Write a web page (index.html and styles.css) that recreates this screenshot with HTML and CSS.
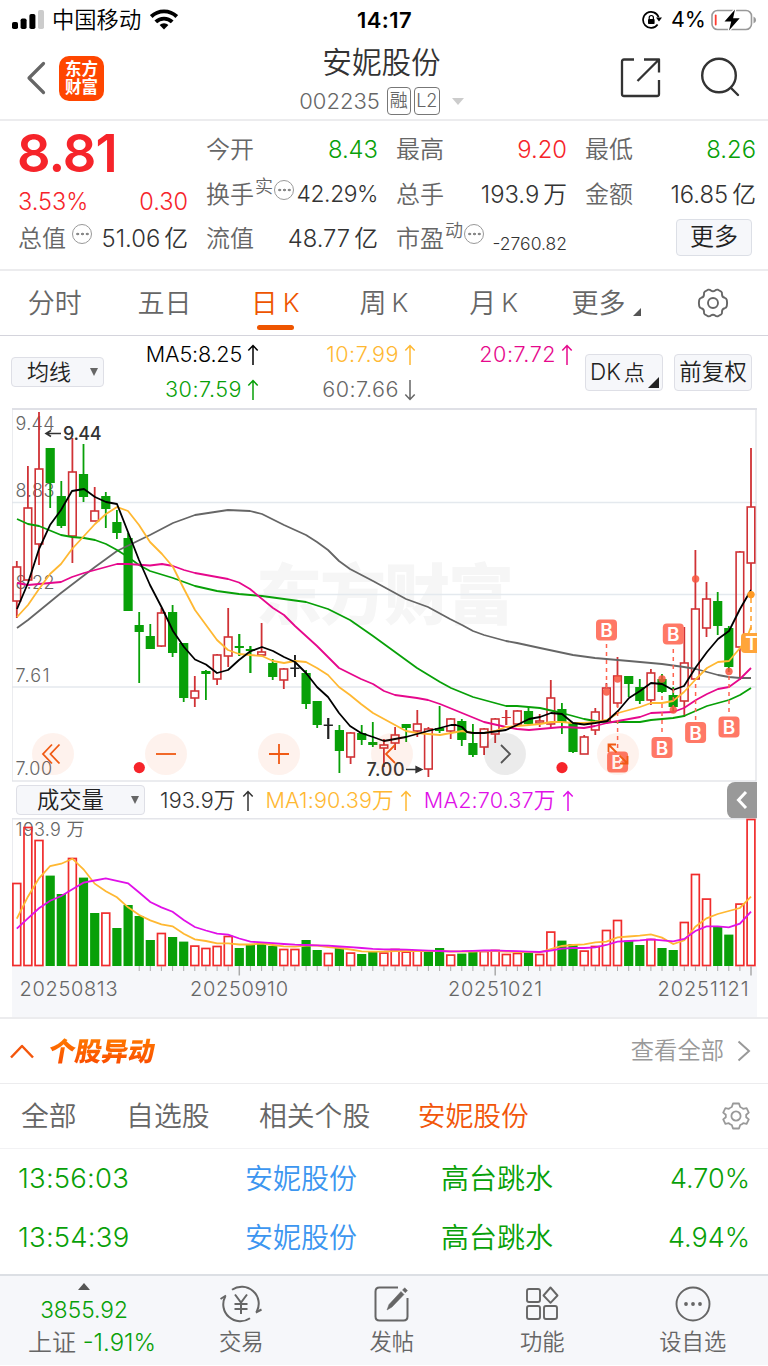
FILE: index.html
```html
<!DOCTYPE html>
<html lang="zh-CN">
<head>
<meta charset="UTF-8">
<meta name="viewport" content="width=device-width, initial-scale=1.0">
<title>安妮股份 002235</title>
<link rel="stylesheet" href="styles.css">
</head>
<body>

<div class="status-bar">
    <div class="status-left">
        <svg width="32" height="20" viewBox="0 0 32 20">
            <rect x="0" y="12" width="6" height="7" rx="1.8"/>
            <rect x="8.6" y="8.5" width="6" height="10.5" rx="1.8"/>
            <rect x="17.4" y="4" width="6" height="15" rx="1.8"/>
            <rect x="26" y="0" width="6" height="19" rx="1.8" fill="#ccc"/>
        </svg>
        <span class="carrier">中国移动</span>
        <svg class="wifi" width="28" height="21" viewBox="0 0 28 21" fill="none" stroke="#000" stroke-width="3.9">
            <path d="M1.2 7.6a18.3 18.3 0 0 1 25.6 0"/>
            <path d="M5.8 12.9a11.8 11.8 0 0 1 16.4 0"/>
            <path d="M14 20.5l-4.4-4.5a6.3 6.3 0 0 1 8.8 0z" fill="#000" stroke="none"/>
        </svg>
    </div>
    <div class="status-time">14:17</div>
    <div class="status-right">
        <svg width="20" height="18" viewBox="0 0 20 18" fill="none" stroke="#000" stroke-width="1.7">
            <path d="M16.6 6.2A8 8 0 1 0 15.6 13.5"/>
            <path d="M14 6.4h6l-3 4z" fill="#000" stroke="none"/>
            <rect x="6" y="8" width="6.6" height="5" rx=".8" fill="#000" stroke="none"/>
            <path d="M7.2 8V6.6a2.1 2.1 0 0 1 4.2 0V8" stroke-width="1.2"/>
        </svg>
        <span class="battery-pct">4%</span>
        <svg width="46" height="22" viewBox="0 0 46 22">
            <rect x="1" y="1.5" width="39.5" height="19" rx="5.5" fill="none" stroke="#999" stroke-width="1.6"/>
            <rect x="3.8" y="5.5" width="1.8" height="11" rx=".9" fill="#ff3b30"/>
            <path d="M42.5 7.5q2.6 1 2.6 3.5t-2.6 3.5z" fill="#999"/>
            <path d="M24 .5L13.5 12.5h6.7L18 21.5 28.7 9.3h-6.6z" stroke="#fff" stroke-width="2.5" paint-order="stroke"/>
        </svg>
    </div>
</div>

<div class="header">
    <svg class="back" width="20" height="34" viewBox="0 0 20 34" fill="none" stroke="#666" stroke-width="3.2" stroke-linecap="round" stroke-linejoin="round">
        <path d="M17.5 2.5L3 17l14.5 14.5"/>
    </svg>
    <div class="logo"><span>东方</span><span>财富</span></div>
    <div class="stock-name">
        <div class="name">安妮股份</div>
        <div class="code-line">
            <span class="code">002235</span>
            <span class="badge">融</span>
            <span class="badge wide">L2</span>
            <span class="tri-down"></span>
        </div>
    </div>
    <svg class="share" width="41" height="41" viewBox="0 0 41 41" fill="none" stroke="#333" stroke-width="2.3" stroke-linejoin="round">
        <path d="M14 2.5H4Q2 2.5 2 4.5V37q0 2 2 2h33q2 0 2-2V23"/>
        <path d="M24 2.5h15V15.5M39 2.5L17.5 24"/>
    </svg>
    <svg class="search" width="41" height="41" viewBox="0 0 41 41" fill="none" stroke="#333" stroke-width="2.4" stroke-linecap="round">
        <circle cx="19" cy="18.5" r="16.8"/>
        <path d="M31 31l7 7"/>
    </svg>
</div>

<div class="quote">
    <div class="quote-main">
        <div class="price">8.81</div>
        <div class="change"><span>3.53%</span><span>0.30</span></div>
        <div class="item"><label>总值</label><i class="more-dot gap"></i><b>51.06<em>亿</em></b></div>
    </div>
    <div class="quote-col">
        <div class="item"><label>今开</label><b class="green">8.43</b></div>
        <div class="item"><label>换手</label><sup>实</sup><i class="more-dot"></i><b class="tight">42.29%</b></div>
        <div class="item"><label>流值</label><b>48.77<em>亿</em></b></div>
    </div>
    <div class="quote-col">
        <div class="item"><label>最高</label><b class="red">9.20</b></div>
        <div class="item"><label>总手</label><b>193.9<em>万</em></b></div>
        <div class="item"><label>市盈</label><sup>动</sup><i class="more-dot"></i><b class="small">-2760.82</b></div>
    </div>
    <div class="quote-col">
        <div class="item"><label>最低</label><b class="green">8.26</b></div>
        <div class="item"><label>金额</label><b>16.85<em>亿</em></b></div>
        <div class="item more-row"><button class="more-btn">更多</button></div>
    </div>
</div>

<div class="tabs">
    <div class="tab">分时</div>
    <div class="tab">五日</div>
    <div class="tab active">日<em>K</em></div>
    <div class="tab">周<em>K</em></div>
    <div class="tab">月<em>K</em></div>
    <div class="tab more">更多<span class="corner"></span></div>
    <div class="tab">
        <svg width="32" height="30" viewBox="-16 -15 32 30" fill="none" stroke="#666" stroke-width="1.9" stroke-linejoin="round">
            <path d="M-5-13.3Q-3-13.6-2.2-12.5Q0-10.8 2.2-12.5Q3-13.6 5-13.3L8.4-11.2Q9.2-10.4 9-8.8Q9-5.6 11.8-5.2Q13.4-4.8 13.8-3Q14.4 0 13.8 3Q13.4 4.8 11.8 5.2Q9 5.6 9 8.8Q9.2 10.4 8.4 11.2L5 13.3Q3 13.6 2.2 12.5Q0 10.8-2.2 12.5Q-3 13.6-5 13.3L-8.4 11.2Q-9.2 10.4-9 8.8Q-9 5.6-11.8 5.2Q-13.4 4.8-13.8 3Q-14.4 0-13.8-3Q-13.4-4.8-11.8-5.2Q-9-5.6-9-8.8Q-9.2-10.4-8.4-11.2Z"/>
            <circle r="5"/>
        </svg>
    </div>
</div>

<div class="ma-bar">
    <div class="select ma-select">均线<span class="arrow"></span></div>
    <div class="ma-grid">
        <div class="ma black"><span>MA5:8.25</span><svg class="up"><use href="#arrow"/></svg></div>
        <div class="ma orange"><span>10:7.99</span><svg class="up"><use href="#arrow"/></svg></div>
        <div class="ma pink"><span>20:7.72</span><svg class="up"><use href="#arrow"/></svg></div>
        <div class="ma green"><span>30:7.59</span><svg class="up"><use href="#arrow"/></svg></div>
        <div class="ma gray"><span>60:7.66</span><svg class="up down"><use href="#arrow"/></svg></div>
    </div>
    <div class="btn dk">DK<em>点</em><span class="corner"></span></div>
    <div class="btn">前复权</div>
</div>

<div class="chart">
    <svg id="kline" width="745" height="374" viewBox="12 408 745 374"></svg>
    <div class="chart-tools">
        <span class="tool"><svg viewBox="-21 -21 42 42"><path d="M-1-9.5L-10 0l9 9.5M6.5-9.5L-2.5 0l9 9.5"/></svg></span>
        <span class="tool"><svg viewBox="-21 -21 42 42"><path d="M-10 0h20"/></svg></span>
        <span class="tool"><svg viewBox="-21 -21 42 42"><path d="M-10 0h20M0-10v20"/></svg></span>
        <span class="tool"><svg viewBox="-21 -21 42 42"><path d="M3-9L-6 0l9 9"/></svg></span>
        <span class="tool dark"><svg viewBox="-21 -21 42 42"><path d="M-4-9L5 0l-9 9"/></svg></span>
        <span class="tool"><svg viewBox="-21 -21 42 42"><path d="M-9.5-2v-7.5H-2M9.5 2v7.5H2M-9.5-9.5l8 8M9.5 9.5l-8-8"/></svg></span>
    </div>
</div>

<div class="vol-bar">
    <div class="select vol-select">成交量<span class="arrow"></span></div>
    <div class="ma dark"><span>193.9万</span><svg class="up"><use href="#arrow"/></svg></div>
    <div class="ma orange"><span>MA1:90.39万</span><svg class="up"><use href="#arrow"/></svg></div>
    <div class="ma purple"><span>MA2:70.37万</span><svg class="up"><use href="#arrow"/></svg></div>
    <div class="collapse">
        <svg width="12" height="20" viewBox="0 0 12 20" fill="none" stroke="#fff" stroke-width="3"><path d="M10 2L2.5 10l7.5 8"/></svg>
    </div>
</div>

<div class="volume">
    <svg id="volume" width="745" height="199" viewBox="12 818 745 199"></svg>
</div>

<div class="section-head">
    <svg width="24" height="15" viewBox="0 0 24 15" fill="none" stroke="#f4560c" stroke-width="2.5" stroke-linejoin="round"><path d="M1 13.5L12 2l11 11.5"/></svg>
    <div class="section-title">个股异动</div>
    <div class="see-all">查看全部</div>
    <svg width="14" height="22" viewBox="0 0 14 22" fill="none" stroke="#999" stroke-width="2"><path d="M1.5 1.5L12 11 1.5 20.5"/></svg>
</div>

<div class="filters">
    <span>全部</span>
    <span>自选股</span>
    <span>相关个股</span>
    <span class="active">安妮股份</span>
    <svg width="28" height="28" viewBox="-14 -14 28 28" fill="none" stroke="#999" stroke-width="1.8" stroke-linejoin="round">
        <path d="M-3-12.5H3L4.2-9Q6-8.2 7.2-7.2L10.6-7.8 12.8-3.4 10.2-1.2V1.2L12.8 3.4 10.6 7.8 7.2 7.2Q6 8.2 4.2 9L3 12.5H-3L-4.2 9Q-6 8.2-7.2 7.2L-10.6 7.8-12.8 3.4-10.2 1.2V-1.2L-12.8-3.4-10.6-7.8-7.2-7.2Q-6-8.2-4.2-9Z"/>
        <circle r="4.6"/>
    </svg>
</div>

<div class="events">
    <div class="event"><span>13:56:03</span><span class="blue">安妮股份</span><span>高台跳水</span><span class="pct">4.70%</span></div>
    <div class="event"><span>13:54:39</span><span class="blue">安妮股份</span><span>高台跳水</span><span class="pct">4.94%</span></div>
</div>

<div class="nav">
    <div class="nav-index">
        <span class="tri-up"></span>
        <div class="index-value">3855.92</div>
        <div class="index-name"><em>上证</em> -1.91%</div>
    </div>
    <div class="nav-item">
        <svg width="42" height="38" viewBox="-21 -19 42 38" fill="none" stroke="#666" stroke-width="2">
            <path d="M-9-14.3A17 17 0 0 1 15.8 7.5M9 14.3A17 17 0 0 1-15.8-7.5"/>
            <path d="M-20.5-5l5.500-3.500M20.500 5.500L14.800 8.500"/>
            <path d="M-6-9.500L0-1.500 6-9.500M0-1.500V10M-6.500 0h13M-6.500 5h13"/>
        </svg>
        <span>交易</span>
    </div>
    <div class="nav-item">
        <svg width="38" height="38" viewBox="-19 -19 38 38" fill="none" stroke="#666" stroke-width="2">
            <path d="M6-16.500H-12.500Q-16.500-16.500-16.500-12.500V12.500Q-16.500 16.500-12.500 16.500H11.500Q15.500 16.500 15.500 12.500V-6"/>
            <path d="M-5 6l2-5.500L9-12.500l3 3L0 3z M10.500-14l2.200-2.200 2.800 2.800-2.200 2.200z" fill="#666" stroke-width=".5"/>
        </svg>
        <span>发帖</span>
    </div>
    <div class="nav-item">
        <svg width="38" height="38" viewBox="-19 -19 38 38" fill="none" stroke="#666" stroke-width="1.9">
            <rect x="-15" y="-15" width="13" height="13" rx="2"/>
            <rect x="-15" y="2" width="13" height="13" rx="2"/>
            <rect x="2" y="2" width="13" height="13" rx="2"/>
            <path d="M8.5-16.5L15.5-8.5 8.5-1.2 1.5-8.5z" stroke-linejoin="round"/>
        </svg>
        <span>功能</span>
    </div>
    <div class="nav-item">
        <svg width="38" height="38" viewBox="-19 -19 38 38" fill="none" stroke="#666" stroke-width="1.9">
            <circle r="16.5"/>
            <g fill="#666" stroke="none"><circle cx="-7" r="1.9"/><circle r="1.9"/><circle cx="7" r="1.9"/></g>
        </svg>
        <span>设自选</span>
    </div>
</div>

<svg class="defs">
    <symbol id="arrow" viewBox="0 0 12 22"><path d="M6 1.500V21M1.300 6.500L6 1.500l4.700 5" fill="none" stroke="currentColor" stroke-width="1.5"/></symbol>
</svg>

<script src="chart.js"></script>
</body>
</html>
```

FILE: styles.css
```css
* {
    box-sizing: border-box;
}

body {
    margin: 0;
    width: 768px;
    height: 1366px;
    overflow: hidden;
    background: #fff;
    color: #333;
    font-family: Inter, "Noto Sans CJK SC", sans-serif;
    font-weight: 350;
    line-height: 1;
}

em, i, b {
    font-style: normal;
    font-weight: inherit;
}

svg {
    flex: none;
    display: block;
}

.defs {
    display: none;
}

.green { color: #08a008; }
.red { color: #f6242a; }
.orange { color: #ffb832; }
.pink { color: #e6088c; }
.purple { color: #e010e8; }
.gray { color: #666; }
.black { color: #000; }

/* status bar */
.status-bar {
    height: 40px;
    padding: 0 11px 0 12px;
    display: grid;
    grid-template-columns: 1fr auto 1fr;
    align-items: center;
    color: #000;
}

.status-left {
    display: flex;
    align-items: center;
}

.carrier {
    font-size: 22.3px;
    margin: 0 9px 0 8px;
}

.status-time {
    font-size: 22px;
    font-weight: 600;
    letter-spacing: 0.4px;
}

.status-right {
    display: flex;
    align-items: center;
    justify-content: flex-end;
}

.battery-pct {
    font-size: 21.5px;
    font-weight: 400;
    margin: 0 5px 0 9px;
}

/* header */
.header {
    height: 81px;
    border-bottom: 2px solid #ececee;
    display: grid;
    grid-template-columns: 33px 45px 1fr 41px 41px;
    align-items: center;
    padding: 0 27px 0 26px;
}

.header .back {
    margin-top: -3px;
}

.logo {
    width: 45px;
    height: 45px;
    margin-top: -3px;
    border-radius: 10px;
    background: #ff4600;
    color: #fff;
    font-size: 16.5px;
    font-weight: 700;
    line-height: 18px;
    display: flex;
    flex-direction: column;
    align-items: center;
    justify-content: center;
}

.stock-name {
    display: flex;
    flex-direction: column;
    align-items: center;
    gap: 10px;
    margin-top: 4px;
}

.share, .search {
    margin-top: -4px;
}

.share {
    margin-left: -39px;
}

.name {
    font-size: 29.6px;
}

.code-line {
    display: flex;
    align-items: center;
    gap: 3px;
    color: #666;
}

.code {
    font-size: 22px;
    margin-right: 4px;
}

.badge {
    width: 24px;
    height: 28px;
    border: 1px solid #777;
    border-radius: 4px;
    font-size: 18px;
    display: flex;
    align-items: center;
    justify-content: center;
}

.badge.wide {
    width: 26px;
}

.tri-down {
    border: 6.5px solid transparent;
    border-top: 7px solid #ccc;
    border-bottom: 0;
    margin-left: 9px;
}

/* quote */
.quote {
    height: 150px;
    border-bottom: 2px solid #ececee;
    padding: 7px 12px 0 18px;
    display: grid;
    grid-template-columns: 170px 172px 171px 171px;
    column-gap: 18px;
}

.price {
    font-size: 52.5px;
    line-height: 50px;
    height: 50px;
    font-weight: 600;
    letter-spacing: -1px;
    margin-left: -1px;
    color: #f6242a;
}

.change {
    display: flex;
    justify-content: space-between;
    height: 39px;
    line-height: 47px;
    font-size: 23.5px;
    color: #f6242a;
}

.item {
    height: 44.5px;
    display: flex;
    align-items: center;
}

.item label {
    font-size: 24px;
    color: #666;
}

.item b {
    margin-left: auto;
    font-size: 23.8px;
    white-space: nowrap;
}

.item b em {
    margin-left: 4px;
}

.item b.tight {
    font-size: 22.8px;
    letter-spacing: -0.4px;
}

.item b.small {
    font-size: 17.5px;
    padding-top: 8px;
}

.item sup {
    font-size: 18px;
    line-height: 1;
    color: #666;
    align-self: flex-start;
    margin: 5px 1px 0;
}

.more-dot {
    width: 20px;
    height: 20px;
    flex: none;
    border: 1.5px solid #999;
    border-radius: 50%;
    margin-top: -10px;
    background: radial-gradient(circle, #888 1.2px, transparent 1.6px) center / 4.8px 20px;
    background-clip: content-box;
    padding: 0 1.5px;
}

.more-dot.gap {
    margin-left: 6px;
}

.more-row {
    justify-content: flex-end;
    padding-right: 4px;
}

.more-btn {
    width: 76px;
    height: 37px;
    margin-top: -4px;
    padding: 0;
    border: 1.5px solid #dcdfe6;
    border-radius: 4px;
    background: #f6f7fa;
    font: inherit;
    font-size: 24px;
    color: #222;
}

/* tabs */
.tabs {
    height: 65px;
    border-bottom: 1px solid #d4d4dc;
    display: grid;
    grid-template-columns: repeat(7, 1fr);
}

.tab {
    position: relative;
    display: flex;
    align-items: center;
    justify-content: center;
    font-size: 27px;
    color: #666;
}

.tab em {
    margin-left: 5px;
    font-size: 26px;
}

.tab.active {
    color: #ee5500;
    padding-left: 2px;
}

.tab.active::after {
    content: "";
    position: absolute;
    bottom: 5px;
    width: 37px;
    height: 5px;
    border-radius: 3px;
    background: #ee5500;
}

.tab.more {
    padding-left: 6px;
}

.corner {
    border-left: 8px solid transparent;
    border-bottom: 8px solid #555;
    align-self: flex-end;
}

.tab .corner {
    margin: 0 0 19px 8px;
}

/* moving averages */
.ma-bar {
    height: 72px;
    padding: 0 15px 0 11px;
    display: flex;
    align-items: center;
}

.select, .btn {
    border: 1.5px solid #dedfe6;
    border-radius: 4px;
    background: #f6f7fa;
    color: #222;
    display: flex;
    align-items: center;
    flex: none;
}

.arrow {
    border: 4.5px solid transparent;
    border-top: 8px solid #666;
    border-bottom: 0;
    margin-left: auto;
}

.ma-select {
    width: 93px;
    height: 30px;
    font-size: 22px;
    padding: 0 5px 0 15px;
}

.ma-grid {
    display: grid;
    grid-template-columns: 155px 157px 157px;
    grid-template-rows: 35px 35px;
    margin-right: 12px;
    padding-top: 1px;
}

.ma {
    display: flex;
    align-items: center;
    justify-content: flex-end;
    font-size: 21.6px;
    white-space: nowrap;
}

.ma .up {
    width: 12px;
    height: 22px;
    margin-left: 5px;
}

.ma .down {
    transform: rotate(180deg);
}

.ma-grid .ma span {
    letter-spacing: 0.5px;
}

.ma-grid .black span {
    letter-spacing: -0.2px;
}

.btn {
    height: 37px;
    width: 78px;
    font-size: 22.5px;
    justify-content: center;
    margin-right: 11px;
}

.btn + .btn {
    margin-right: 0;
}

.btn.dk {
    justify-content: flex-start;
    padding-left: 4px;
}

.dk em {
    margin-left: 3px;
    font-size: 21px;
}

.dk .corner {
    border-left-width: 11px;
    border-bottom: 11px solid #222;
    margin: 0 3px 2px auto;
}

/* k-line */
.chart {
    position: relative;
    height: 374px;
    padding-left: 12px;
}

.chart text, .volume text {
    font-family: Inter, "Noto Sans CJK SC", sans-serif;
}

.chart-tools {
    position: absolute;
    left: 32px;
    bottom: 7px;
    display: flex;
    gap: 71px;
}

.tool {
    width: 42px;
    height: 42px;
    border-radius: 50%;
    background: rgba(240, 90, 20, 0.08);
}

.tool.dark {
    background: rgba(0, 0, 0, 0.08);
}

.tool path {
    fill: none;
    stroke: #f05a14;
    stroke-width: 1.8;
}

.tool.dark path {
    stroke: #555;
}

.watermark {
    font-size: 66px;
    font-weight: 900;
    fill: #f6f6f6;
}

.axis-label {
    font-size: 18px;
    fill: #666;
}

.extreme {
    font-size: 18px;
    font-weight: 500;
    fill: #333;
}

.mark-text {
    font-size: 19px;
    font-weight: 600;
    fill: #fff;
    text-anchor: middle;
}

.date {
    font-size: 20px;
    fill: #666;
}

/* volume */
.vol-bar {
    height: 36px;
    padding: 0 11px 0 16px;
    display: flex;
    align-items: center;
}

.vol-select {
    width: 129px;
    height: 30px;
    font-size: 22.3px;
    padding: 0 5px 0 20px;
    margin-right: 15px;
}

.vol-bar .ma {
    margin-right: 12px;
    letter-spacing: 0.15px;
    padding-top: 2px;
}

.vol-bar .ma .up {
    margin-left: 6px;
}

.collapse {
    width: 30px;
    height: 37px;
    margin-left: auto;
    border-radius: 8px 0 0 8px;
    background: #999;
    display: flex;
    align-items: center;
    justify-content: center;
}

.volume {
    height: 201px;
    padding-left: 12px;
    border-bottom: 2px solid #ececee;
}

/* unusual moves */
.section-head {
    height: 65px;
    border-bottom: 1.5px solid #ececee;
    padding: 0 17px 0 10px;
    display: flex;
    align-items: center;
}

.section-title {
    margin-left: 15px;
    font-size: 26.5px;
    font-weight: 900;
    transform: skewX(-10deg);
    background: linear-gradient(#ff8000, #fa4600);
    -webkit-background-clip: text;
    background-clip: text;
    color: transparent;
    line-height: 34px;
}

.see-all {
    margin-left: auto;
    margin-right: 13px;
    font-size: 23.3px;
    color: #999;
}

.filters {
    height: 65px;
    border-bottom: 1px solid #f2f2f4;
    padding: 2px 18px 0 21px;
    display: flex;
    align-items: center;
    font-size: 27.8px;
    color: #666;
    gap: 49.5px;
}

.filters .active {
    color: #f2560a;
    margin-left: -2px;
}

.filters svg {
    margin: -2px 0 0 auto;
}

.events {
    height: 125px;
}

.event {
    height: 59px;
    padding: 0 18px;
    display: grid;
    grid-template-columns: 227px 196px 1fr auto;
    align-items: center;
    font-size: 28px;
    color: #08a008;
}

.event span:first-child {
    font-size: 27.5px;
    letter-spacing: 0.2px;
}

.event .pct {
    font-size: 27px;
}

.event .blue {
    color: #3c96f0;
}

/* bottom nav */
.nav {
    height: 91px;
    border-top: 2px solid #dcdfe4;
    background: #f6f7fa;
    display: grid;
    grid-template-columns: 166px repeat(4, 150.5px);
}

.nav-index {
    display: flex;
    flex-direction: column;
    align-items: center;
    padding: 7px 0 0 2px;
    color: #08a008;
}

.tri-up {
    border: 6px solid transparent;
    border-bottom: 7px solid #555;
    border-top: 0;
}

.index-value {
    margin-top: 9px;
    font-size: 22.7px;
}

.index-name {
    margin: 9px 0 0 16px;
    font-size: 24px;
    white-space: nowrap;
}

.index-name em {
    color: #666;
}

.nav-item {
    display: flex;
    flex-direction: column;
    align-items: center;
    padding-top: 9px;
    font-size: 22.3px;
    color: #666;
    gap: 8px;
}
```

FILE: chart.js
```js
const LEFT = 16.8;
const STEP = 11.125;
const xAt = i => +(LEFT + i * STEP).toFixed(1);

// [kind, high, body top, body bottom, low]; r = up, g = down, k = flat
const candles = [
    ['r', 561, 567, 601, 618], ['r', 466, 508, 580, 580], ['r', 412, 469, 544, 565],
    ['g', 448, 448, 483, 508], ['g', 481, 496, 526, 528], ['r', 438, 472, 536, 563],
    ['g', 444, 474, 497, 502], ['r', 487, 511, 521, 521], ['g', 492, 496, 509, 528],
    ['g', 510, 522, 533, 539], ['g', 533, 538, 611, 611], ['g', 612, 625, 632, 683],
    ['g', 624, 636, 649, 649], ['r', 608, 613, 646, 647], ['g', 605, 612, 653, 657],
    ['g', 643, 643, 698, 702], ['r', 676, 691, 698, 707], ['g', 670, 671, 674, 700],
    ['r', 654, 655, 679, 685], ['r', 608, 637, 656, 667], ['g', 634, 646, 648, 656],
    ['g', 646, 649, 651, 673], ['r', 623, 652, 655, 655], ['g', 659, 663, 677, 680],
    ['r', 668, 669, 680, 689], ['k', 655, 667.5, 669, 677], ['g', 670, 673, 704, 709],
    ['g', 701, 701, 725, 728], ['k', 718, 724.5, 726, 739], ['g', 725, 730, 751, 773],
    ['r', 732, 733, 757, 764], ['g', 725, 733, 740, 745], ['g', 722, 742, 745, 747],
    ['r', 739, 745, 748, 767], ['r', 727, 735, 743, 750], ['g', 724, 724, 728, 742],
    ['r', 710, 724, 731, 737], ['r', 727, 729, 769, 777], ['g', 706, 728, 731, 733],
    ['r', 718, 719, 731, 739], ['g', 719, 721, 740, 746], ['g', 724, 743, 755, 757],
    ['r', 728, 729, 747, 755], ['r', 718, 719, 734, 743], ['r', 710, 717, 718, 725],
    ['r', 710, 711, 724, 724], ['g', 707, 711, 724, 725], ['r', 714, 721, 723, 727],
    ['r', 680, 698, 724, 728], ['g', 703, 709, 723, 734], ['g', 723, 723, 752, 753],
    ['r', 735, 737, 754, 754], ['r', 708, 712, 730, 735], ['r', 683, 688, 721, 721],
    ['r', 657, 676, 703, 707], ['g', 676, 676, 684, 697], ['g', 679, 687, 701, 704],
    ['r', 669, 673, 700, 705], ['g', 674, 679, 692, 693], ['g', 687, 695, 707, 712],
    ['r', 627, 663, 701, 717], ['r', 550, 609, 679, 679], ['r', 582, 599, 628, 637],
    ['g', 592, 601, 626, 635], ['g', 626, 628, 667, 672], ['r', 551, 552, 647, 680],
    ['r', 448, 507, 563, 590]
];

const maLines = {
    '#666': '17,628 28,620 61,593 95,567 117,551 150,535 173,523 184,519 195,515 228,510 250,511 262,514 284,525 295,530 306,535 317,542 328,550 339,561 350,569 373,581 406,599 428,607 450,619 462,625 473,631 484,635 506,641 517,643 540,648 573,655 595,658 629,661 662,664 684,667 696,669 718,675 729,677 740,678 751,678',
    '#08a008': '17,519 28,524 39,526 61,535 72,537 84,538 95,540 106,544 117,550 128,557 139,565 150,571 173,578 195,586 217,591 239,594 262,596 284,599 306,602 328,609 350,620 373,636 395,652 417,668 440,682 451,688 473,697 495,703 506,706 517,706 540,708 562,713 584,719 595,721 607,722 640,722 651,720 673,718 684,716 707,706 718,703 729,700 740,695 751,688',
    '#e6088c': '17,583 28,585 39,584 61,582 72,577 84,573 117,564 128,564 150,565.5 162,564 173,566 184,570 195,573 228,579 239,582.5 250,589 273,608 284,615 295,626 317,646 328,657 339,668 361,679 373,684 384,691 395,695 417,698 428,700 440,704 462,713 484,722 506,727 517,729 529,730 540,729 551,728 562,727 584,728 595,726 607,723 618,721 629,719 640,717 651,713 673,712 684,708 696,700 707,694 718,689 729,687 740,679 751,668',
    '#ffb832': '17,617 28,605 39,589 50,574 61,564 72,549 84,536 95,524 106,514 117,507 128,511 139,525 150,542 162,554 173,567 184,589 195,610 206,625 217,640 228,650 239,654 250,655 262,656 273,661 284,663 295,661 306,662 317,668 328,675 339,687 350,695 361,704 373,713 384,719 395,725 406,731 417,733 428,734 440,735 451,733 462,731 473,733 484,733 495,731 506,727 517,726 529,725 540,724 551,722 562,722 573,723 584,723 595,722 607,720 618,713 629,710 640,707 651,703 662,703 673,701 684,692 696,679 707,668 718,662 729,661 740,648 746,640 751,627',
    '#000': '17,609 28,583 39,549 50,525 61,510 72,491 84,489 95,497 106,502 117,504 128,532 139,560 150,585 162,608 173,631 184,647 195,659.5 206,664.5 217,673 228,670 239,660 250,651.5 262,647 273,651 284,657 295,662 306,673 317,687 328,697 339,713 350,726 361,733 373,737 384,741 395,739 406,737 417,734 428,731 440,728 451,725 456,725 462,727 467,732 473,733 484,733 495,731.5 506,730 517,725 529,719 540,717 551,713 562,714 573,723 584,724.5 595,723 607,721 618,711 629,698 640,691 651,683 662,684 673,690 684,686 696,667 707,652 718,639 729,631 740,609 751,590'
};

// x, badge y, dot y, dash start, dash end
const marks = [
    [606.5, 630, 692, 644, 688], [673.3, 634, 710, 649, 708], [617.6, 762, 679, 704, 748],
    [662, 747.5, 679, 696, 735], [695.6, 732.5, 579, 684, 720], [729, 727, 671.5, 676, 715]
];

let k = '<text class="watermark" x="256" y="619" textLength="258">东方财富</text>';
[502.5, 594.5, 687].forEach(y => {
    k += `<path d="M12 ${y}H757" stroke="#e4e9ee" stroke-width="1.5"/>`;
});
k += '<rect x="12" y="409" width="744" height="372" fill="none" stroke="#e0e2e6" stroke-width="1.3"/>';
k += '<path d="M12 409H757" stroke="#dfe0e6" stroke-width="2"/>';

[['9.44', 429.5, 39], ['8.83', 496.5, 39], ['8.22', 589, 39], ['7.61', 682, 34], ['7.00', 774.5, 36.5]].forEach(l => {
    k += `<text class="axis-label" x="15.5" y="${l[1]}" textLength="${l[2]}">${l[0]}</text>`;
});

const colors = { r: '#d03236', g: '#08a008', k: '#222' };
candles.forEach((c, i) => {
    const [kind, high, top, bottom, low] = c;
    const x = xAt(i);
    const color = colors[kind];
    k += `<path d="M${x} ${high}V${top}M${x} ${bottom}V${low}" stroke="${color}" stroke-width="1.8"/>`;
    if (kind === 'r' && bottom - top > 1) {
        k += `<rect x="${x - 3.8}" y="${top}" width="7.6" height="${bottom - top}" fill="none" stroke="${color}" stroke-width="1.6"/>`;
    } else {
        k += `<rect x="${x - 4.6}" y="${top}" width="9.2" height="${bottom - top}" fill="${color}"/>`;
    }
    // thin bodies need the wick to run through them
    if (bottom - top < 3 && kind !== 'r' || bottom - top === 1) {
        k += `<path d="M${x} ${high}V${low}" stroke="${color}" stroke-width="1.8"/>`;
    }
});

for (const color in maLines) {
    k += `<polyline points="${maLines[color]}" fill="none" stroke="${color}" stroke-width="1.8" stroke-linejoin="round"/>`;
}

marks.forEach(([x, by, dy, y1, y2]) => {
    k += `<path d="M${x} ${y1}V${y2}" stroke="#ff6450" stroke-width="1.5" stroke-dasharray="4 4"/>`;
    k += `<circle cx="${x}" cy="${dy}" r="3.7" fill="#f8543c" opacity=".85"/>`;
    k += `<rect x="${x - 10.5}" y="${by - 10.5}" width="21" height="21" rx="4" fill="#ff7866"/>`;
    k += `<text class="mark-text" x="${x}" y="${by + 7}">B</text>`;
});
k += '<path d="M751 598V632" stroke="#ff9f28" stroke-width="1.5" stroke-dasharray="5 4"/>';
k += '<circle cx="751" cy="594.6" r="3.7" fill="#ff9a24"/>';
k += '<path d="M757 633H745q-4 0-4 4v12q0 4 4 4h12z" fill="#ffa53a"/>';
k += '<text class="mark-text" x="751.5" y="650">T</text>';

k += '<path d="M46 433.5h15M51 430.5l-5 3 5 3" fill="none" stroke="#333" stroke-width="1.6"/>';
k += '<text class="extreme" x="63" y="440" textLength="38.5">9.44</text>';
k += '<path d="M406 769.5h15M416 766.5l6 3-6 3z" fill="#333" stroke="#333" stroke-width="1.3"/>';
k += '<text class="extreme" x="366.5" y="776" textLength="38">7.00</text>';
k += '<circle cx="139.3" cy="767.6" r="5.6" fill="#f6242a"/><circle cx="562" cy="767.6" r="5.6" fill="#f6242a"/>';
document.getElementById('kline').innerHTML = k;

// top of each volume bar
const volumes = [
    883, 827, 840, 875.6, 894, 858, 877.6, 913, 912.6, 928, 905, 916, 940, 933, 937, 941.6,
    945.6, 948, 946, 936, 948, 945, 943, 946, 949, 949, 940, 950, 953, 948, 952.6, 954, 951.6,
    952.6, 949, 951.6, 950.6, 950.6, 948, 954.6, 953.6, 952, 951, 950, 954, 953, 953, 954,
    931.6, 940.6, 944, 950.6, 946, 930, 920, 940.6, 945, 939, 948, 950, 922, 874, 898.6,
    926.6, 934.6, 903.6, 819
];
const volDown = [3, 4, 6, 7, 9, 10, 11, 12, 14, 15, 20, 21, 22, 23, 26, 27, 29, 31, 32, 37, 38, 40, 41, 46, 49, 50, 55, 56, 58, 59, 63, 64];
const volMa1 = [
    918.7, 896.7, 878.3, 866, 863.7, 858.7, 869.3, 883.7, 891.3, 897.3, 907.3, 915, 920.3,
    924.3, 926.3, 933.7, 939.3, 941, 943.3, 943.3, 944.5, 944.5, 943.5, 945, 946.3, 946.7,
    945.5, 945.5, 947, 948, 949.5, 951.3, 951.7, 951.5, 951, 951, 951, 951, 951, 951.5, 951.5,
    951.5, 951, 951, 951.5, 952, 952, 952.3, 949, 946, 945, 944.3, 942.3, 941.7, 937.3, 936.5,
    935.7, 934.3, 937.7, 944, 940.3, 926.7, 918.3, 914, 911, 908, 896.7
];
const volMa2 = [
    928.7, 918.3, 908.3, 900.7, 896, 889.3, 882.7, 880.5, 878.3, 880.8, 883.3, 892.5, 902,
    907.3, 911.7, 920, 927, 930.5, 933.7, 934.7, 938.5, 941.7, 942.3, 943.2, 944, 944.7, 945,
    945.3, 945.7, 946.5, 947.2, 948, 948.8, 949.3, 949.5, 949.7, 950.2, 950.6, 951, 951.3,
    951.2, 950.8, 950.5, 950.4, 950.8, 951.2, 951.7, 952, 950.5, 948.7, 948, 948, 947.3, 945,
    941.7, 941, 940.3, 939.3, 940.3, 941.3, 939, 931, 926.3, 926.3, 927.3, 923.7, 911.7
];

let v = '<rect x="12" y="966" width="745" height="51" fill="#f6f7fa"/>';
v += '<path d="M12 966V818.8H757" fill="none" stroke="#e4e5ea" stroke-width="1.5"/>';
v += '<text class="axis-label" x="15.5" y="836" textLength="69">193.9 万</text>';
volumes.forEach((y, i) => {
    const x = xAt(i);
    if (volDown.includes(i)) {
        v += `<rect x="${x - 4.6}" y="${y}" width="9.2" height="${966 - y}" fill="#08a008"/>`;
    } else {
        v += `<rect x="${x - 3.9}" y="${y + 0.5}" width="7.8" height="${965 - y}" fill="none" stroke="#f02c2c" stroke-width="1.7"/>`;
    }
    if (i > 10) {
        const long = i === 20 || i === 43 || i === 66;
        v += `<path d="M${x} 966V${long ? 975.5 : 971}" stroke="#aaa" stroke-width="${long ? 1.5 : 1}"/>`;
    }
});
[[volMa1, '#ffb832'], [volMa2, '#e010e8']].forEach(([data, color]) => {
    const points = data.map((y, i) => xAt(i) + ',' + y).join(' ');
    v += `<polyline points="${points}" fill="none" stroke="${color}" stroke-width="1.8"/>`;
});
[['20250813', 19.5, 98], ['20250910', 190, 98], ['20251021', 448, 94], ['20251121', 657.5, 91]].forEach(d => {
    v += `<text class="date" x="${d[1]}" y="995.5" textLength="${d[2]}">${d[0]}</text>`;
});
document.getElementById('volume').innerHTML = v;
```
